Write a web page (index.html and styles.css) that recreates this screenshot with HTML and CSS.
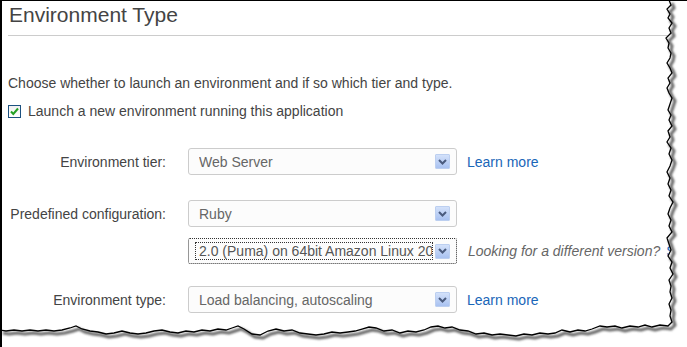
FILE: index.html
```html
<!DOCTYPE html>
<html lang="en">
<head>
    <meta charset="UTF-8">
    <title>Environment Type</title>
    <link rel="stylesheet" href="styles.css">
</head>
<body>
    <div class="page">
        <div class="header">
            <h1 class="title">Environment Type</h1>
        </div>
        <p class="intro">Choose whether to launch an environment and if so which tier and type.</p>
        <label class="launch">
            <span class="check">
                <svg width="11" height="11" viewBox="0 0 11 11"><path d="M2 5.5 L4.3 8 L9 2.5" fill="none" stroke="#25a125" stroke-width="2"/></svg>
            </span>
            Launch a new environment running this application
        </label>
        <div class="form">
            <div class="row row-tier">
                <span class="label">Environment tier:</span>
                <div class="select">
                    <span class="value">Web Server</span>
                    <span class="arrow"><svg width="9" height="6" viewBox="0 0 9 6"><path d="M1 1 L4.5 4.5 L8 1" fill="none" stroke="#4a5b7e" stroke-width="2"/></svg></span>
                </div>
                <a class="more">Learn more</a>
            </div>
            <div class="row row-config">
                <span class="label">Predefined configuration:</span>
                <div class="select">
                    <span class="value">Ruby</span>
                    <span class="arrow"><svg width="9" height="6" viewBox="0 0 9 6"><path d="M1 1 L4.5 4.5 L8 1" fill="none" stroke="#4a5b7e" stroke-width="2"/></svg></span>
                </div>
            </div>
            <div class="row row-version">
                <span class="label"></span>
                <div class="select focused">
                    <span class="value">2.0 (Puma) on 64bit Amazon Linux 2014.09 v1.1.0 running Ruby 2.0 (Puma)</span>
                    <span class="arrow"><svg width="9" height="6" viewBox="0 0 9 6"><path d="M1 1 L4.5 4.5 L8 1" fill="none" stroke="#4a5b7e" stroke-width="2"/></svg></span>
                </div>
                <span class="note">Looking for a different version? <a class="more">See all</a></span>
            </div>
            <div class="row row-type">
                <span class="label">Environment type:</span>
                <div class="select">
                    <span class="value">Load balancing, autoscaling</span>
                    <span class="arrow"><svg width="9" height="6" viewBox="0 0 9 6"><path d="M1 1 L4.5 4.5 L8 1" fill="none" stroke="#4a5b7e" stroke-width="2"/></svg></span>
                </div>
                <a class="more">Learn more</a>
            </div>
        </div>
        <svg class="torn" width="687" height="347" viewBox="0 0 687 347">
            <defs>
                <filter id="blur" x="-5%" y="-5%" width="110%" height="110%"><feGaussianBlur stdDeviation="1.2"/></filter>
            </defs>
            <path class="cut" d="M669,0 L671,5 L667,9 L670,14 L668,18 L672,23 L669,28 L671,33 L666,38 L669,43 L668,48 L671,53 L670,58 L667,63 L670,68 L672,73 L668,78 L670,83 L667,88 L669,93 L672,98 L670,104 L668,110 L671,115 L669,120 L672,126 L668,131 L670,137 L667,142 L671,148 L669,154 L672,160 L670,166 L667,172 L670,178 L668,184 L671,190 L669,196 L673,202 L670,208 L668,214 L671,220 L669,226 L672,232 L667,238 L669,244 L671,250 L668,256 L672,262 L670,268 L673,274 L669,280 L671,286 L670,292 L672,298 L669,304 L671,310 L670,316 L672,322 L668,326 L660,325 L652,327 L645,325 L638,327 L630,326 L622,328 L615,326 L607,327 L600,326 L592,329 L585,331 L578,330 L570,332 L562,330 L555,333 L548,334 L540,333 L532,335 L524,334 L516,336 L508,335 L500,334 L492,335 L484,333 L476,334 L468,331 L460,330 L452,327 L445,328 L438,326 L431,327 L424,330 L416,332 L408,331 L400,333 L392,330 L384,331 L376,328 L369,327 L362,329 L355,331 L348,332 L340,333 L332,332 L324,334 L316,335 L308,334 L300,333 L292,330 L284,331 L276,329 L268,331 L260,335 L252,334 L244,329 L238,326 L232,328 L226,330 L218,329 L210,331 L202,330 L194,332 L186,331 L178,333 L170,332 L162,330 L154,331 L146,333 L138,334 L130,333 L122,331 L114,333 L106,334 L98,332 L90,331 L82,329 L76,326 L70,328 L62,330 L54,331 L46,330 L38,331 L30,330 L22,331 L14,330 L6,331 L0,330 L0,347 L687,347 L687,0 Z"/>
            <path class="shadow" filter="url(#blur)" transform="translate(3,3)" d="M669,0 L671,5 L667,9 L670,14 L668,18 L672,23 L669,28 L671,33 L666,38 L669,43 L668,48 L671,53 L670,58 L667,63 L670,68 L672,73 L668,78 L670,83 L667,88 L669,93 L672,98 L670,104 L668,110 L671,115 L669,120 L672,126 L668,131 L670,137 L667,142 L671,148 L669,154 L672,160 L670,166 L667,172 L670,178 L668,184 L671,190 L669,196 L673,202 L670,208 L668,214 L671,220 L669,226 L672,232 L667,238 L669,244 L671,250 L668,256 L672,262 L670,268 L673,274 L669,280 L671,286 L670,292 L672,298 L669,304 L671,310 L670,316 L672,322 L668,326 L660,325 L652,327 L645,325 L638,327 L630,326 L622,328 L615,326 L607,327 L600,326 L592,329 L585,331 L578,330 L570,332 L562,330 L555,333 L548,334 L540,333 L532,335 L524,334 L516,336 L508,335 L500,334 L492,335 L484,333 L476,334 L468,331 L460,330 L452,327 L445,328 L438,326 L431,327 L424,330 L416,332 L408,331 L400,333 L392,330 L384,331 L376,328 L369,327 L362,329 L355,331 L348,332 L340,333 L332,332 L324,334 L316,335 L308,334 L300,333 L292,330 L284,331 L276,329 L268,331 L260,335 L252,334 L244,329 L238,326 L232,328 L226,330 L218,329 L210,331 L202,330 L194,332 L186,331 L178,333 L170,332 L162,330 L154,331 L146,333 L138,334 L130,333 L122,331 L114,333 L106,334 L98,332 L90,331 L82,329 L76,326 L70,328 L62,330 L54,331 L46,330 L38,331 L30,330 L22,331 L14,330 L6,331 L0,330"/>
            <path class="edge" d="M669,0 L671,5 L667,9 L670,14 L668,18 L672,23 L669,28 L671,33 L666,38 L669,43 L668,48 L671,53 L670,58 L667,63 L670,68 L672,73 L668,78 L670,83 L667,88 L669,93 L672,98 L670,104 L668,110 L671,115 L669,120 L672,126 L668,131 L670,137 L667,142 L671,148 L669,154 L672,160 L670,166 L667,172 L670,178 L668,184 L671,190 L669,196 L673,202 L670,208 L668,214 L671,220 L669,226 L672,232 L667,238 L669,244 L671,250 L668,256 L672,262 L670,268 L673,274 L669,280 L671,286 L670,292 L672,298 L669,304 L671,310 L670,316 L672,322 L668,326 L660,325 L652,327 L645,325 L638,327 L630,326 L622,328 L615,326 L607,327 L600,326 L592,329 L585,331 L578,330 L570,332 L562,330 L555,333 L548,334 L540,333 L532,335 L524,334 L516,336 L508,335 L500,334 L492,335 L484,333 L476,334 L468,331 L460,330 L452,327 L445,328 L438,326 L431,327 L424,330 L416,332 L408,331 L400,333 L392,330 L384,331 L376,328 L369,327 L362,329 L355,331 L348,332 L340,333 L332,332 L324,334 L316,335 L308,334 L300,333 L292,330 L284,331 L276,329 L268,331 L260,335 L252,334 L244,329 L238,326 L232,328 L226,330 L218,329 L210,331 L202,330 L194,332 L186,331 L178,333 L170,332 L162,330 L154,331 L146,333 L138,334 L130,333 L122,331 L114,333 L106,334 L98,332 L90,331 L82,329 L76,326 L70,328 L62,330 L54,331 L46,330 L38,331 L30,330 L22,331 L14,330 L6,331 L0,330"/>
        </svg>
    </div>
</body>
</html>
```

FILE: styles.css
```css
* {
    margin: 0;
    padding: 0;
    box-sizing: border-box;
}
body,html {
    width: 100%;
    height: 100%;
}
body {
    background: #fff;
    font-family: "Liberation Sans", Arial, sans-serif;
    font-size: 14px;
    color: #444;
    overflow: hidden;
}
.page {
    position: relative;
    height: 100%;
    border-left: 2px solid #000;
    border-top: 1px solid #000;
    overflow: hidden;
}
.header {
    margin-left: 6px;
    padding: 2px 0 8px 1px;
    border-bottom: 1px solid #ccc;
}
.title {
    font-size: 21px;
    font-weight: normal;
    line-height: 24px;
    color: #444;
}
.intro {
    margin: 38px 0 0 6px;
    line-height: 18px;
}
.launch {
    display: flex;
    align-items: center;
    margin: 10px 0 0 6px;
    line-height: 18px;
}
.check {
    display: flex;
    align-items: center;
    justify-content: center;
    width: 13px;
    height: 13px;
    margin-right: 7px;
    border: 1px solid #1c5180;
    background: linear-gradient(#f0f0f0, #fff);
}
.form {
    padding-left: 6px;
}
.row {
    display: flex;
    align-items: center;
    height: 27px;
}
.row-tier {
    margin-top: 28px;
}
.row-config {
    margin-top: 25px;
}
.row-version {
    margin-top: 11px;
    height: 26px;
}
.row-type {
    margin-top: 22px;
}
.label {
    width: 158px;
    text-align: right;
    color: #444;
    flex-shrink: 0;
}
.select {
    display: flex;
    align-items: center;
    width: 269px;
    height: 100%;
    margin-left: 22px;
    padding: 0 6px 0 10px;
    border: 1px solid #ccc;
    border-radius: 3px;
    background: #fcfcfc;
    flex-shrink: 0;
}
.value {
    flex: 1;
    color: #666;
    white-space: nowrap;
    overflow: hidden;
}
.arrow {
    display: flex;
    align-items: center;
    justify-content: center;
    width: 15px;
    height: 15px;
    margin-left: 2px;
    border: 1px solid #bccff0;
    border-radius: 1px;
    background: linear-gradient(#d3e1fa, #a9c2f1);
    flex-shrink: 0;
}
.focused {
    border: 1px dotted #333;
    border-radius: 2px;
    padding-left: 6px;
}
.focused .value {
    padding: 0 0 0 3px;
    line-height: 16px;
    border: 1px dotted #333;
    color: #555;
    text-overflow: clip;
}
.more {
    margin-left: 10px;
    color: #1a66b8;
    text-decoration: none;
    white-space: nowrap;
}
.note {
    margin-left: 11px;
    font-style: italic;
    color: #666;
    white-space: nowrap;
}
.note .more {
    margin-left: 2px;
    font-style: normal;
}
.torn {
    position: absolute;
    left: -2px;
    top: -1px;
}
.cut {
    fill: #fff;
}
.shadow {
    fill: none;
    stroke: #666;
    stroke-width: 3;
}
.edge {
    fill: none;
    stroke: #000;
    stroke-width: 1.3;
}
```
